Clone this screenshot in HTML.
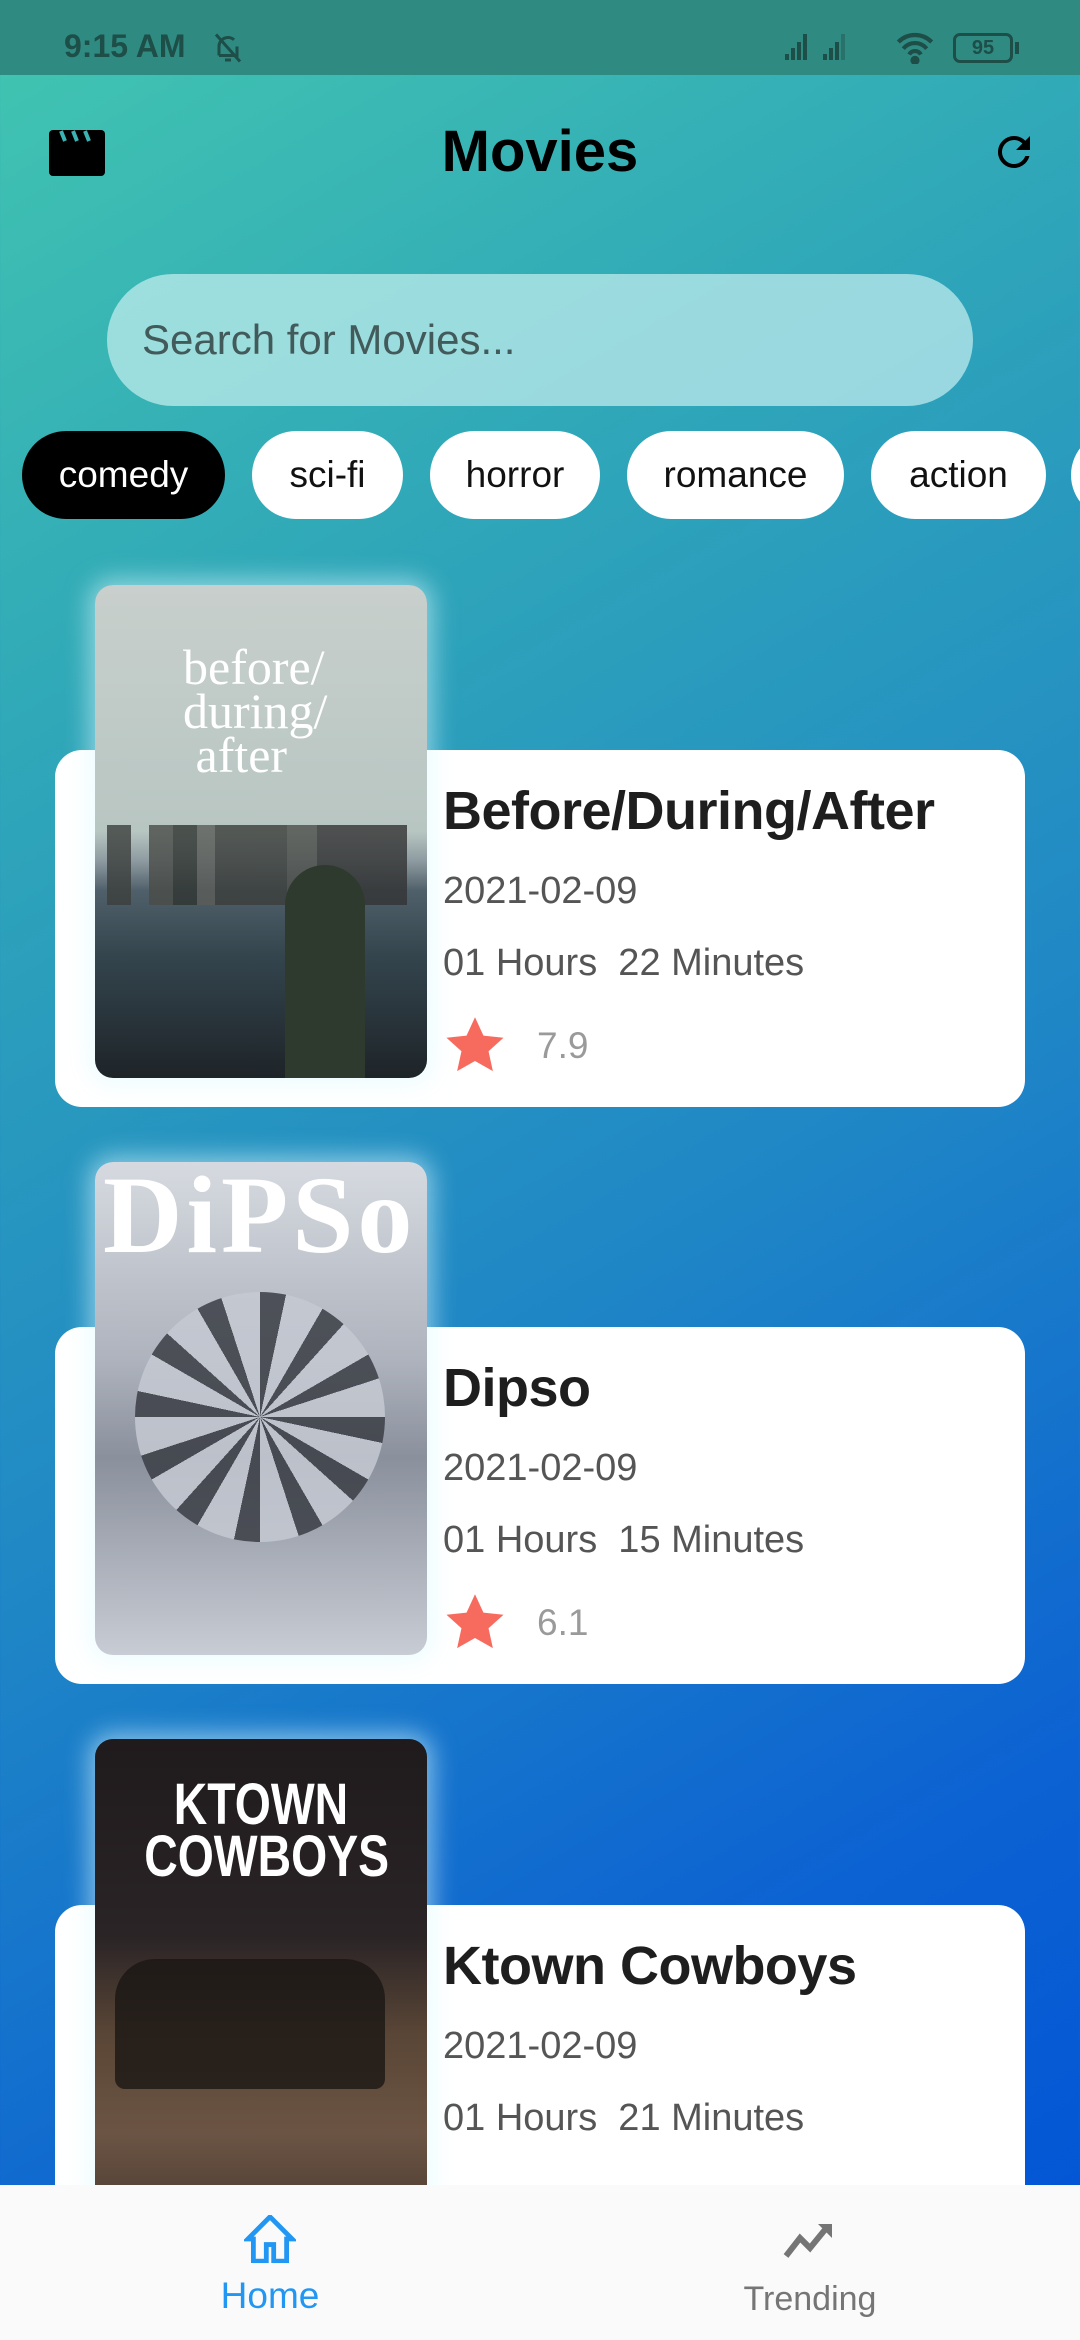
<!DOCTYPE html>
<html><head><meta charset="utf-8"><style>
*{margin:0;padding:0;box-sizing:border-box}
body{width:1080px;height:2340px;overflow:hidden;position:relative;font-family:"Liberation Sans",sans-serif;background:linear-gradient(150deg,#42c6b0 0%,#30a8b8 25%,#1f86c6 55%,#0c62d2 80%,#0052d6 100%)}
.status{position:absolute;left:0;top:0;width:1080px;height:75px;background:#2f8a82}
.abs{position:absolute}
.chip{position:absolute;top:431px;height:88px;border-radius:44px;background:#fff;color:#111;font-size:37px;display:flex;align-items:center;justify-content:center}
.card{position:absolute;left:55px;width:970px;height:357px;background:#fff;border-radius:27px}
.poster{position:absolute;left:95px;width:332px;height:493px;border-radius:18px;overflow:hidden;box-shadow:0 0 24px 6px rgba(220,250,255,.55)}
.t{position:absolute;left:443px;font-weight:bold;font-size:54px;color:#1e1e1e;letter-spacing:-.5px}
.d{position:absolute;left:443px;font-size:38px;color:#555}
.r{position:absolute;left:537px;font-size:37px;color:#9a9a9a}
.nav{position:absolute;left:0;top:2185px;width:1080px;height:155px;background:#fafafa}
</style></head><body>
<div class="status">
 <div class="abs" style="left:64px;top:28px;font-size:32px;font-weight:bold;color:#1d4e48">9:15 AM</div>
 <svg class="abs" style="left:210px;top:30px" width="36" height="36" viewBox="0 0 24 24" fill="none" stroke="#1d4e48" stroke-width="2"><path d="M6 17V11a6 6 0 0 1 10-4.5M18 11v6H6M10 20h4M4 3l16 18"/></svg>
 <svg class="abs" style="left:783px;top:30px" width="80" height="32" viewBox="0 0 80 32" fill="#1d4e48"><rect x="2" y="24" width="4" height="6"/><rect x="8" y="18" width="4" height="12"/><rect x="14" y="12" width="4" height="18"/><rect x="20" y="4" width="4" height="26"/><rect x="40" y="24" width="4" height="6"/><rect x="46" y="18" width="4" height="12"/><rect x="52" y="12" width="4" height="18"/><rect x="58" y="4" width="4" height="26" opacity=".4"/></svg>
 <svg class="abs" style="left:895px;top:30px" width="40" height="34" viewBox="0 0 24 20" fill="none" stroke="#1d4e48" stroke-width="2.5"><path d="M2 7a14 14 0 0 1 20 0M5 11a9 9 0 0 1 14 0M8.5 14.5a4 4 0 0 1 7 0"/><circle cx="12" cy="18" r="1.5" fill="#1d4e48"/></svg>
 <div class="abs" style="left:953px;top:33px;width:60px;height:30px;border:3px solid #1d4e48;border-radius:7px;font-size:20px;color:#1d4e48;text-align:center;line-height:24px;font-weight:bold">95</div>
 <div class="abs" style="left:1015px;top:42px;width:4px;height:12px;background:#1d4e48"></div>
</div>
<svg class="abs" style="left:49px;top:130px" width="56" height="46" viewBox="0 0 56 46"><rect x="0" y="0" width="56" height="46" rx="4" fill="#000"/><path d="M12 1l4 10M24 1l4 10M36 1l4 10" stroke="#3bb3b2" stroke-width="4"/></svg>
<div class="abs" style="left:0;width:1080px;top:118px;text-align:center;font-size:58px;font-weight:bold;color:#000">Movies</div>
<svg class="abs" style="left:990px;top:128px" width="48" height="48" viewBox="0 0 24 24"><path d="M17.65 6.35A7.96 7.96 0 0 0 12 4a8 8 0 1 0 7.73 10h-2.08A6 6 0 1 1 12 6c1.66 0 3.14.69 4.22 1.78L13 11h7V4l-2.35 2.35z" fill="#000"/></svg>
<div class="abs" style="left:107px;top:274px;width:866px;height:132px;border-radius:66px;background:rgba(200,240,240,.7);"></div>
<div class="abs" style="left:142px;top:316px;font-size:42px;color:#435a5a">Search for Movies...</div>
<div class="chip" style="left:22px;width:203px;background:#000;color:#fff">comedy</div>
<div class="chip" style="left:252px;width:151px">sci-fi</div>
<div class="chip" style="left:430px;width:170px">horror</div>
<div class="chip" style="left:627px;width:217px">romance</div>
<div class="chip" style="left:871px;width:175px">action</div>
<div class="chip" style="left:1071px;width:100px"></div>

<div class="card" style="top:750px"></div>
<div class="poster" style="top:585px;background:linear-gradient(180deg,#c8cfcc 0%,#b8c6c2 50%,#8d9aa0 56%,#50606a 62%,#34454e 75%,#1e2428 100%)">
 <div class="abs" style="left:88px;top:60px;font-family:'Liberation Serif',serif;color:#fff;font-size:50px;line-height:44px">before/<br>during/<br>&nbsp;after</div>
 <div class="abs" style="left:12px;top:240px;width:300px;height:80px;background:linear-gradient(90deg,#3b3f3c 0 8%,transparent 8% 14%,#4a4c48 14% 22%,#2f3430 22% 30%,#5a5c58 30% 36%,#3a3d3a 36% 60%,#4c4e4a 60% 70%,#333 70% 100%);opacity:.8"></div>
 <div class="abs" style="left:190px;top:280px;width:80px;height:213px;background:#2f3a2e;border-radius:40px 40px 0 0"></div>
</div>
<div class="t" style="top:780px">Before/During/After</div>
<div class="d" style="top:870px">2021-02-09</div>
<div class="d" style="top:942px">01 Hours&nbsp; 22 Minutes</div>
<svg class="abs" style="left:446px;top:1017px" width="58" height="56" viewBox="0 0 24 23"><path d="M12 0l3.5 7.6 8.3.9-6.2 5.6 1.8 8.2L12 18.1 4.6 22.3l1.8-8.2L.2 8.5l8.3-.9z" fill="#f76b5f"/></svg>
<div class="r" style="top:1025px">7.9</div>

<div class="card" style="top:1327px"></div>
<div class="poster" style="top:1162px;background:linear-gradient(180deg,#d6dae0 0%,#aeb3bd 40%,#8a909c 60%,#c8ccd4 100%)">
 <div class="abs" style="left:8px;top:-10px;font-size:110px;font-weight:bold;color:#fff;letter-spacing:4px;font-family:'Liberation Serif',serif">DiPSo</div>
 <div class="abs" style="left:40px;top:130px;width:250px;height:250px;border-radius:50%;background:repeating-conic-gradient(#3a3d44 0 12deg,#c5c9d2 12deg 30deg);opacity:.85"></div>
</div>
<div class="t" style="top:1357px">Dipso</div>
<div class="d" style="top:1447px">2021-02-09</div>
<div class="d" style="top:1519px">01 Hours&nbsp; 15 Minutes</div>
<svg class="abs" style="left:446px;top:1594px" width="58" height="56" viewBox="0 0 24 23"><path d="M12 0l3.5 7.6 8.3.9-6.2 5.6 1.8 8.2L12 18.1 4.6 22.3l1.8-8.2L.2 8.5l8.3-.9z" fill="#f76b5f"/></svg>
<div class="r" style="top:1602px">6.1</div>

<div class="card" style="top:1905px"></div>
<div class="poster" style="top:1739px;background:linear-gradient(180deg,#1f1a1c 0%,#2a2426 40%,#5a4636 60%,#6b5444 80%,#4a3a30 100%)">
 <div class="abs" style="left:20px;top:40px;width:292px;text-align:center;color:#fff;font-weight:bold;font-size:58px;line-height:52px;transform:scaleX(.8)">KTOWN<br>COWBOYS</div>
 <div class="abs" style="left:20px;top:220px;width:270px;height:130px;background:#1a1614;border-radius:40px 40px 10px 10px;opacity:.8"></div>
</div>
<div class="t" style="top:1935px">Ktown Cowboys</div>
<div class="d" style="top:2025px">2021-02-09</div>
<div class="d" style="top:2097px">01 Hours&nbsp; 21 Minutes</div>

<div class="nav">
 <svg class="abs" style="left:244px;top:30px" width="52" height="48" viewBox="0 0 28 26"><path d="M14 1L2 13h3v12h7v-9h4v9h7V13h3z" fill="none" stroke="#2196f3" stroke-width="2.6"/></svg>
 <div class="abs" style="left:0;width:540px;top:90px;text-align:center;font-size:37px;color:#2196f3">Home</div>
 <svg class="abs" style="left:782px;top:35px" width="56" height="40" viewBox="0 0 28 20"><path d="M2 18l7-9 5 5 9-11" fill="none" stroke="#757575" stroke-width="3"/><path d="M18 2h7v7z" fill="#757575"/></svg>
 <div class="abs" style="left:540px;width:540px;top:95px;text-align:center;font-size:34px;color:#757575">Trending</div>
</div>
</body></html>
